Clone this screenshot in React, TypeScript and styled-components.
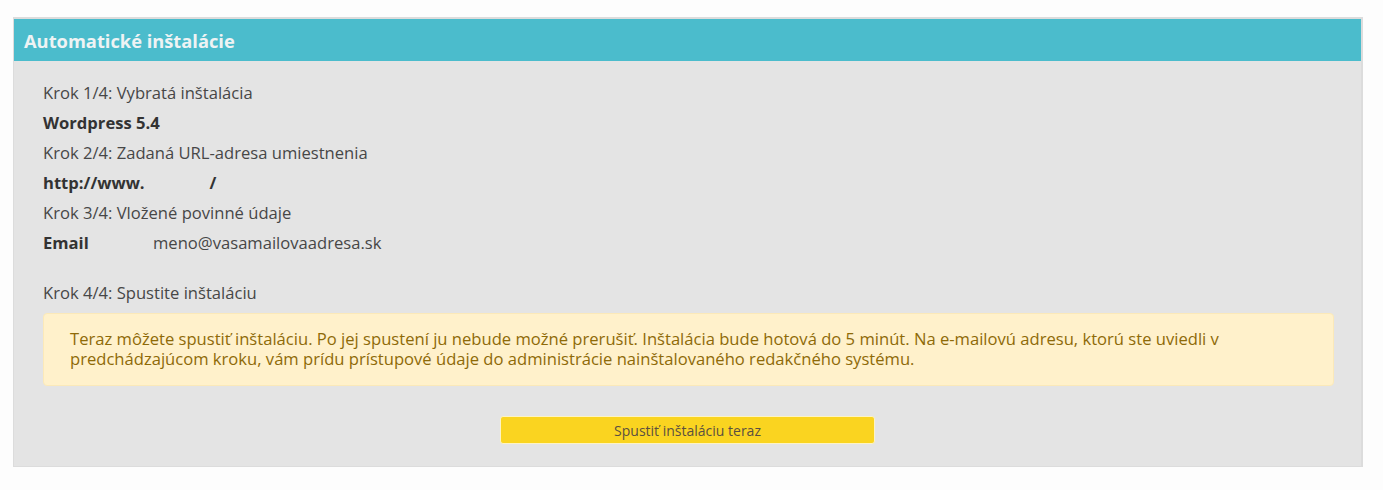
import React from "react";
import styled, { createGlobalStyle } from "styled-components";

const GlobalStyle = createGlobalStyle`
  body {
    margin: 0;
    background: #fdfdfd;
    font-family: "Open Sans", "Liberation Sans", sans-serif;
  }
`;

const Page = styled.div`
  padding: 17px 20px 23px 13px;
`;

const Panel = styled.section`
  background: #e4e4e4;
  border-top: 2px solid #dcdcdc;
  border-left: 1px solid #dcdcdc;
  border-right: 2px solid #dcdcdc;
  border-bottom: 1px solid #dcdcdc;
`;

const PanelHeader = styled.h2`
  margin: 0;
  height: 42px;
  display: flex;
  align-items: center;
  padding: 0 10px;
  background: #4bbccc;
  color: #eef3f4;
  font-size: 18.3px;
  font-weight: 700;
`;

const PanelBody = styled.div`
  padding: 17px 27px 22px 29px;
  color: #474747;
  font-size: 16.6px;
`;

const Line = styled.div<{ $bold?: boolean; $gap?: number }>`
  line-height: 30px;
  font-weight: ${(p) => (p.$bold ? 700 : 400)};
  color: ${(p) => (p.$bold ? "#333" : "#474747")};
  margin-top: ${(p) => p.$gap ?? 0}px;
`;

const Field = styled.div`
  display: grid;
  grid-template-columns: 110px auto;
  line-height: 30px;
`;

const FieldLabel = styled.span`
  font-weight: 700;
  color: #333;
`;

const Blank = styled.span`
  display: inline-block;
  width: 65px;
`;

const Notice = styled.div`
  margin-top: 5px;
  padding: 15px 26px 16px 26px;
  background: #fff1cb;
  border: 1px solid #fbe9b9;
  border-radius: 4px;
  color: #8e6a08;
  line-height: 20px;
`;

const Actions = styled.div`
  display: flex;
  justify-content: center;
  margin-top: 30px;
  padding-right: 2px;
`;

const RunButton = styled.button`
  width: 375px;
  height: 28px;
  background: #fad420;
  border: 1px solid #fdf3c4;
  border-radius: 3px;
  color: #5a5040;
  font-family: "Open Sans", "Liberation Sans", sans-serif;
  font-size: 14px;
  cursor: pointer;
`;

export default function App() {
  return (
    <>
      <GlobalStyle />
      <Page>
        <Panel>
          <PanelHeader>Automatické inštalácie</PanelHeader>
          <PanelBody>
            <Line>Krok 1/4: Vybratá inštalácia</Line>
            <Line $bold>Wordpress 5.4</Line>
            <Line>Krok 2/4: Zadaná URL-adresa umiestnenia</Line>
            <Line $bold>
              http://www.<Blank />/
            </Line>
            <Line>Krok 3/4: Vložené povinné údaje</Line>
            <Field>
              <FieldLabel>Email</FieldLabel>
              <span>meno@vasamailovaadresa.sk</span>
            </Field>
            <Line $gap={20}>Krok 4/4: Spustite inštaláciu</Line>
            <Notice>
              Teraz môžete spustiť inštaláciu. Po jej spustení ju nebude možné prerušiť. Inštalácia bude hotová do 5 minút. Na e-mailovú adresu, ktorú ste uviedli v predchádzajúcom kroku, vám prídu prístupové údaje do administrácie nainštalovaného redakčného systému.
            </Notice>
            <Actions>
              <RunButton>Spustiť inštaláciu teraz</RunButton>
            </Actions>
          </PanelBody>
        </Panel>
      </Page>
    </>
  );
}
